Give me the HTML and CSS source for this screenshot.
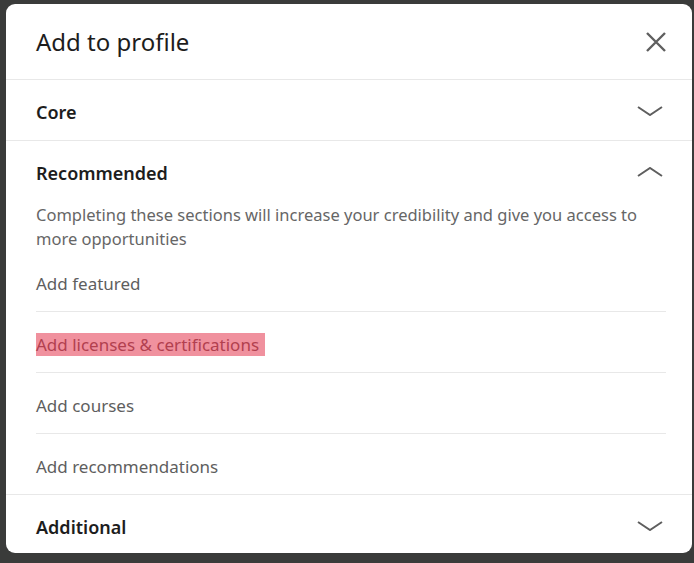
FILE: index.html
```html
<!DOCTYPE html>
<html lang="en">
<head>
    <meta charset="UTF-8">
    <meta name="viewport" content="width=device-width, initial-scale=1.0">
    <title>Add to profile</title>
    <link rel="stylesheet" href="styles.css">
</head>
<body>
    <div class="modal">
        <div class="modal-header">
            <h1>Add to profile</h1>
            <button class="close" aria-label="Dismiss">
                <svg width="20" height="20" viewBox="0 0 20 20"><path d="M1 1 L19 19 M19 1 L1 19" stroke="#5f5f5f" stroke-width="2.4" fill="none"/></svg>
            </button>
        </div>

        <div class="section">
            <div class="section-head">
                <h2>Core</h2>
                <svg class="chevron" width="26" height="10" viewBox="0 0 26 10"><path d="M1 1 L13 9 L25 1" stroke="#5f5f5f" stroke-width="2" fill="none"/></svg>
            </div>
        </div>

        <div class="section open">
            <div class="section-head">
                <h2>Recommended</h2>
                <svg class="chevron" width="26" height="10" viewBox="0 0 26 10"><path d="M1 9 L13 1 L25 9" stroke="#5f5f5f" stroke-width="2" fill="none"/></svg>
            </div>
            <p class="desc">Completing these sections will increase your credibility and give you access to more opportunities</p>
            <ul class="items">
                <li>Add featured</li>
                <li><span class="mark">Add licenses &amp; certifications</span></li>
                <li>Add courses</li>
                <li>Add recommendations</li>
            </ul>
        </div>

        <div class="section last">
            <div class="section-head">
                <h2>Additional</h2>
                <svg class="chevron" width="26" height="10" viewBox="0 0 26 10"><path d="M1 1 L13 9 L25 1" stroke="#5f5f5f" stroke-width="2" fill="none"/></svg>
            </div>
        </div>
    </div>
</body>
</html>
```

FILE: styles.css
```css
body {
    margin: 0;
    padding: 4px 2px 10px 6px;
    background-color: #3a3b3a;
    font-family: "Noto Sans", "Open Sans", sans-serif;
}
.modal {
    width: 686px;
    height: 549px;
    background-color: white;
    border-radius: 9px;
    overflow: hidden;
}
.modal-header {
    height: 75px;
    display: flex;
    align-items: center;
    justify-content: space-between;
    padding: 0 26px 0 30px;
    border-bottom: 1px solid #e8e8e8;
}
.modal-header h1 {
    margin: 0;
    font-size: 24px;
    font-weight: 400;
    color: #1d1d1d;
}
.close {
    background: none;
    border: none;
    padding: 0;
    width: 20px;
    height: 20px;
    cursor: pointer;
}
.section {
    border-bottom: 1px solid #e8e8e8;
}
.section.last {
    border-bottom: none;
}
.section-head {
    box-sizing: border-box;
    height: 60px;
    display: flex;
    align-items: center;
    justify-content: space-between;
    padding: 4px 29px 0 30px;
}
.section-head .chevron {
    margin-top: -3px;
}
.section-head h2 {
    margin: 0;
    font-size: 18px;
    font-weight: 600;
    color: #1d1d1d;
}
.desc {
    margin: 0;
    padding: 2px 30px 0 30px;
    font-size: 16.5px;
    line-height: 24px;
    color: #666666;
}
.items {
    list-style: none;
    margin: 0;
    padding: 0;
}
.items li {
    box-sizing: border-box;
    height: 61px;
    margin: 0 26px 0 30px;
    padding-top: 5px;
    display: flex;
    align-items: center;
    font-size: 17px;
    color: #5e5e5e;
    border-bottom: 1px solid #e8e8e8;
}
.items li:last-child {
    height: 60px;
    border-bottom: none;
}
.mark {
    background-color: #f0919e;
    color: #b2404f;
    padding-right: 6px;
}
```
